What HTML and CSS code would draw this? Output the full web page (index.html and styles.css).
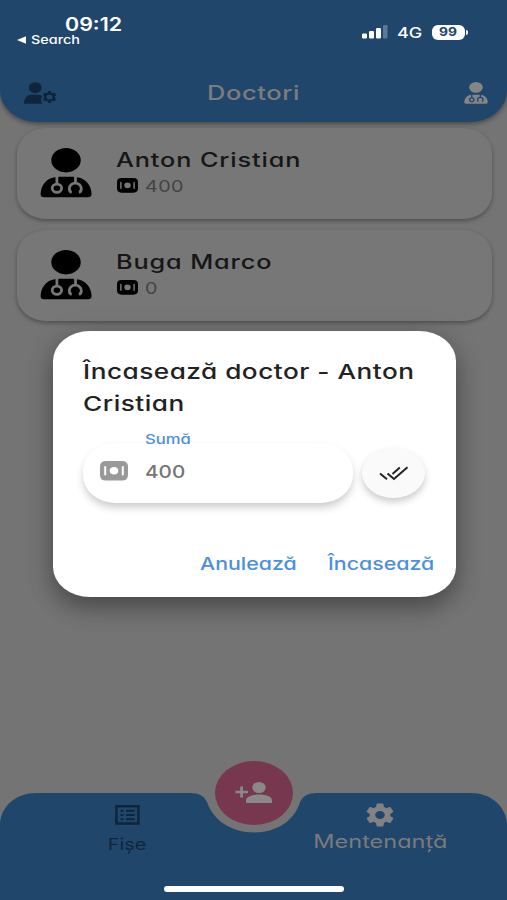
FILE: index.html
```html
<!DOCTYPE html>
<html lang="ro">
<head>
<meta charset="utf-8">
<title>Doctori</title>
<link rel="stylesheet" href="styles.css">
</head>
<body>
<svg class="defs" width="0" height="0">
  <defs>
    <symbol id="doctor" viewBox="0 0 52 50" preserveAspectRatio="none">
      <ellipse cx="26" cy="12.2" rx="14.7" ry="12.2"/>
      <path d="M13.500 29.400 Q16 29 19 28.800 H33 Q35 28.900 38 29.400 C45 30.200 51.400 37 51.600 46 Q51.400 49.200 48 49.200 H4 Q.6 49.200 .6 46 C1 37.400 5.800 31 13.500 29.400 Z"/>
      <g class="cut"><path d="M16.900 28V36M35.500 28V35"/><ellipse cx="16.900" cy="40.300" rx="4.700" ry="4.100"/><path d="M31.800 44.200Q29.300 44 29.300 40.800A6 5.600 0 0 1 41.300 40.800Q41.300 44 38.800 44.200"/></g>
    </symbol>
    <symbol id="cash" viewBox="0 0 28 20" preserveAspectRatio="none">
      <path fill-rule="evenodd" d="M6 0 H22 Q28 0 28 5.5 V14 Q28 19.5 22 19.5 H6 Q0 19.5 0 14 V5.500 Q0 0 6 0 Z M4.200 6 V13.500 Q4.200 14.500 5.200 14.500 Q6.200 14.500 6.200 13.500 V6 Q6.200 5 5.200 5 Q4.200 5 4.200 6 Z M21.800 6 V13.500 Q21.800 14.500 22.800 14.500 Q23.800 14.500 23.800 13.500 V6 Q23.800 5 22.800 5 Q21.800 5 21.800 6 Z M14 6 A4.300 3.800 0 1 0 14 13.600 A4.300 3.800 0 1 0 14 6 Z"/>
    </symbol>
  </defs>
</svg>
<div class="app">
  <header class="header">
    <div class="status">
      <div class="status-left">
        <div class="clock"><span class="t">09:12</span></div>
        <div class="back"><svg width="9" height="8" viewBox="0 0 9 8"><path d="M0 4 9 .3V7.700Z" fill="#fff"/></svg><span class="t">Search</span></div>
      </div>
      <div class="status-right">
        <svg width="26" height="14" viewBox="0 0 26 14"><g fill="#fff"><rect x="0" y="8.500" width="5" height="5" rx="1.300"/><rect x="7" y="6" width="5" height="7.500" rx="1.300"/><rect x="14" y="3" width="5" height="10.500" rx="1.300"/><rect x="21" y="0" width="4.500" height="13.500" rx="1.300" opacity=".28"/></g></svg>
        <span class="network"><span class="t">4G</span></span>
        <span class="battery"><span class="t">99</span></span><i class="battery-tip"></i>
      </div>
    </div>
    <div class="titlebar">
      <svg class="manage" width="33" height="23" viewBox="0 0 33 23"><g fill="#10243a"><ellipse cx="11.300" cy="5.700" rx="6.400" ry="5.500"/><path d="M0 21.700Q0 12.800 8 12.800H14.500Q17.500 13 18.500 14.200 15.500 17.500 18.500 21.700Z"/></g><ellipse cx="25.500" cy="15" rx="4.200" ry="3.600" fill="none" stroke="#10243a" stroke-width="2.500"/><path d="M25.500 9v2.500M25.500 18.500v2.500M19.500 11.900l2.300 1.200M29.200 16.900l2.300 1.200M19.500 18.100l2.300-1.200M29.200 13.100l2.300-1.200" stroke="#10243a" stroke-width="3"/></svg>
      <h1><span class="t">Doctori</span></h1>
      <svg class="profile" width="24" height="22"><use href="#doctor"/></svg>
    </div>
  </header>
  <main class="list">
    <article class="card">
      <svg class="avatar" width="52" height="50"><use href="#doctor"/></svg>
      <div class="info">
        <h2><span class="t">Anton Cristian</span></h2>
        <p><svg width="21" height="15"><use href="#cash"/></svg><span class="t">400</span></p>
      </div>
    </article>
    <article class="card">
      <svg class="avatar" width="52" height="50"><use href="#doctor"/></svg>
      <div class="info">
        <h2><span class="t">Buga Marco</span></h2>
        <p><svg width="21" height="15"><use href="#cash"/></svg><span class="t">0</span></p>
      </div>
    </article>
  </main>
  <nav class="nav">
    <svg class="nav-shape" width="507" height="107" viewBox="0 0 507 107"><path fill="#20466c" d="M0 107V30C2 12 17 0 36 0H190C199 0 204 3 207 9C213 27 231 39.500 254 39.500S295 27 300 9C303 3 308 0 317 0H471C490 0 505 12 507 30V107Z"/></svg>
    <button class="fab"><svg width="38" height="23" viewBox="0 0 38 23"><g fill="#898989"><path d="M5.200 4.500H8V8.700H13V11.300H8V15.500H5.200V11.300H.5V8.700H5.200Z"/><ellipse cx="24" cy="5.500" rx="6.700" ry="5.500"/><path d="M11 21V18.500C11 14 19 12.600 24 12.600S37 14 37 18.500V21Z"/></g></svg></button>
    <div class="tabs">
      <a class="tab records"><svg width="25" height="20" viewBox="0 0 25 20"><path d="M1.400 1.300H23.400V18.600H1.400Z" fill="none" stroke="#10243a" stroke-width="2.500"/><path d="M5.500 5.700H8.500M5.500 10H8.500M5.500 14.300H8.500M11 5.700H19.700M11 10H19.700M11 14.300H19.700" stroke="#10243a" stroke-width="2"/></svg><span class="t">Fișe</span></a>
      <a class="tab service"><svg width="28" height="24" viewBox="1.800 1.500 20.400 21" preserveAspectRatio="none"><path fill="#828282" d="M19.430 12.980c.04-.32.07-.64.07-.98s-.03-.66-.07-.98l2.110-1.650c.19-.15.24-.42.12-.64l-2-3.460c-.12-.22-.39-.3-.61-.22l-2.490 1c-.52-.4-1.080-.73-1.690-.98l-.38-2.650C14.460 2.180 14.250 2 14 2h-4c-.25 0-.46.18-.49.42l-.38 2.650c-.61.25-1.170.59-1.690.98l-2.490-1c-.23-.09-.49 0-.61.22l-2 3.460c-.13.22-.07.49.12.64l2.110 1.650c-.04.32-.07.65-.07.98s.03.66.07.98l-2.110 1.650c-.19.15-.24.42-.12.64l2 3.460c.12.22.39.3.61.22l2.490-1c.52.4 1.080.73 1.690.98l.38 2.650c.03.24.24.42.49.42h4c.25 0 .46-.18.49-.42l.38-2.650c.61-.25 1.170-.59 1.690-.98l2.490 1c.23.09.49 0 .61-.22l2-3.460c.12-.22.07-.49-.12-.64zM12 15.500c-1.930 0-3.500-1.570-3.500-3.500s1.570-3.500 3.500-3.500 3.500 1.570 3.500 3.500-1.570 3.500-3.500 3.500z"/></svg><span class="t">Mentenanță</span></a>
    </div>
    <div class="home"></div>
  </nav>
  <section class="dialog">
    <h2><span class="t">Încasează doctor - Anton</span><span class="t">Cristian</span></h2>
    <div class="label"><span class="t">Sumă</span></div>
    <div class="amount">
      <div class="field"><svg width="28" height="20"><use href="#cash"/></svg><span class="t">400</span></div>
      <button class="all"><svg width="30" height="15" viewBox="0 0 30 15"><path d="M1 7.500 8 13.200M8.500 7.500 15 13 28.500 1.300M13.500 8 20.800 1.500" fill="none" stroke="#222" stroke-width="2"/></svg></button>
    </div>
    <div class="actions"><button class="cancel"><span class="t">Anulează</span></button><button class="confirm"><span class="t">Încasează</span></button></div>
  </section>
</div>
</body>
</html>
```
FILE: styles.css
```css
* { box-sizing: border-box; }
body { margin: 0; font-family: Inter, "Open Sans", sans-serif; font-feature-settings: "cv11" 1; }
h1, h2, p { margin: 0; font-weight: 500; }
button { border: 0; padding: 0; background: none; font: inherit; color: inherit; letter-spacing: inherit; font-feature-settings: inherit; }
svg { display: block; flex: none; }
.defs { position: absolute; }
.t { display: inline-block; white-space: nowrap; transform: scaleX(1.2); transform-origin: left center; }
.cut { fill: none; stroke: var(--cut); stroke-width: 2.800; }
.app { position: relative; width: 507px; height: 900px; overflow: hidden; background: #747474; display: flex; flex-direction: column; }

.header { height: 122px; background: #20466c; border-radius: 0 0 38px 38px / 0 0 31px 31px; box-shadow: 0 2px 5px rgba(0,0,0,.4); }
.status { height: 64px; display: flex; justify-content: space-between; color: #fff; }
.status-left { padding: 13px 0 0 17px; }
.clock { padding-left: 48px; font-size: 18px; line-height: 23px; font-weight: 600; height: 20px; }
.clock .t { transform: scaleX(1.19); }
.back { display: flex; align-items: center; gap: 5px; font-size: 12px; line-height: 13px; font-weight: 500; }
.status-right { display: flex; align-items: center; height: 16px; margin: 24px 39px 0 0; }
.network { width: 35px; margin-left: 9px; font-size: 15px; font-weight: 500; }
.battery { width: 33px; height: 15px; border-radius: 6px; background: #fff; color: #20466c; font-size: 11.5px; font-weight: 700; line-height: 15px; padding-left: 7px; }
.battery-tip { width: 2px; height: 5px; margin-left: 1px; border-radius: 0 2px 2px 0; background: #fff; }
.titlebar { height: 58px; padding: 0 19px 0 24px; display: grid; grid-template-columns: 183px 1fr 24px; align-items: center; }
.titlebar h1 { font-size: 20px; color: #7c7c7c; line-height: 28px; }
.titlebar h1 .t { letter-spacing: .5px; transform: scaleX(1.27); }
.profile { fill: #858585; --cut: #20466c; }

.list { padding: 6px 15px 0 17px; display: grid; gap: 11px; }
.card { height: 91px; border-radius: 29px / 25px; background: #777; box-shadow: 0 2px 4px rgba(0,0,0,.32); padding: 20px 0 0 23px; display: flex; gap: 24px; }
.avatar { fill: #000; --cut: #777; }
.info h2 { font-size: 20px; line-height: 24px; color: #161616; }
.info h2 .t { letter-spacing: .7px; transform: scaleX(1.262); }
.info p { height: 27px; display: flex; align-items: center; gap: 7px; font-size: 16.500px; font-weight: 400; color: #444; padding-left: 1px; }
.info p .t { letter-spacing: .3px; }

.nav { position: relative; margin-top: auto; height: 107px; }
.nav-shape { position: absolute; left: 0; top: 0; }
.fab { position: absolute; left: 215px; top: -32px; width: 78px; height: 64px; border-radius: 50%; background: #77374f; display: grid; place-items: center; }
.tabs { position: relative; display: grid; grid-template-columns: 1fr 1fr; height: 93px; }
.tab { display: flex; flex-direction: column; align-items: center; font-size: 18px; }
.tab .t { transform-origin: center; line-height: 26px; }
.records { padding: 12px 0 0 1px; color: #10243a; }
.records .t { margin-top: 6px; font-size: 16.500px; }
.service { padding-top: 10px; color: #7b7b7b; }
.service .t { margin-top: 2px; transform: scaleX(1.305); }
.home { position: relative; margin-left: 164px; width: 180px; height: 6px; border-radius: 3px; background: #fff; }

.dialog { position: absolute; left: 52.5px; top: 331px; width: 403px; height: 266px; border-radius: 37px / 30px; background: #fff; box-shadow: 0 11px 22px rgba(0,0,0,.28), 0 5px 30px rgba(0,0,0,.15); padding: 25px 21px 0 30.5px; }
.dialog h2 { font-size: 20.5px; line-height: 32px; color: #222; display: flex; flex-direction: column; align-items: flex-start; }
.dialog h2 .t { letter-spacing: .4px; transform: scaleX(1.276); }
.label { padding-left: 62px; margin-top: 12px; height: 11px; line-height: 15px; font-size: 13px; font-weight: 500; color: #4a90df; }
.label .t { transform: scaleX(1.28); }
.amount { display: flex; align-items: center; gap: 9px; }
.field { width: 270px; height: 60px; border-radius: 32px / 28px; box-shadow: 0 5px 8px -1px rgba(0,0,0,.22); display: flex; align-items: center; gap: 17px; padding: 0 17px 4px; font-size: 17.5px; font-weight: 500; color: #757575; }
.field .t { transform: scaleX(1.18); }
.field svg { fill: #999; }
.all { width: 63px; height: 50px; border-radius: 50%; background: #fafafa; box-shadow: 0 4px 7px rgba(0,0,0,.2); display: grid; place-items: center; }
.actions { display: flex; justify-content: flex-end; gap: 32px; margin-top: 49px; font-size: 17.5px; line-height: 24px; font-weight: 500; color: #4a90df; }
.actions button { text-align: left; }
.actions .t { transform: translateX(-1px) scaleX(1.22); }
.cancel { width: 96px; }
.confirm { width: 106px; }
```
